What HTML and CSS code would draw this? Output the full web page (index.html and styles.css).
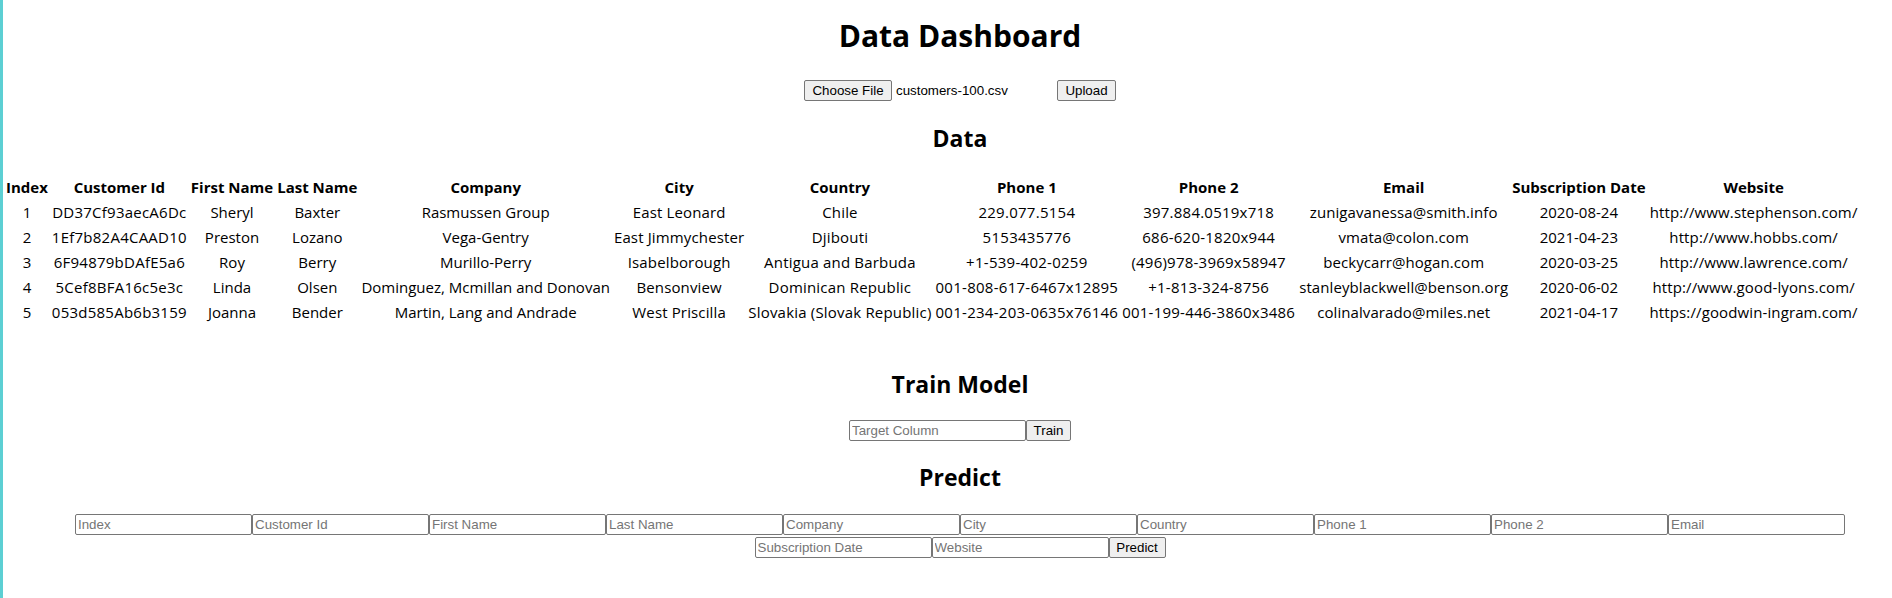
FILE: index.html
```html
<!DOCTYPE html>
<html lang="en">
<head>
<meta charset="utf-8">
<title>Data Dashboard</title>
<link rel="stylesheet" href="styles.css">
</head>
<body>
<h1 class="centered title">Data Dashboard</h1>
<form class="centered upload-row">
  <span class="file-input"><span class="btn btn-choose">Choose File</span><span class="file-name">customers-100.csv</span></span><button type="button" class="btn btn-upload">Upload</button>
</form>
<h2 class="centered section-title data-title">Data</h2>
<table class="data-table">
  <thead>
    <tr><th>Index</th><th>Customer Id</th><th>First Name</th><th>Last Name</th><th>Company</th><th>City</th><th>Country</th><th>Phone 1</th><th>Phone 2</th><th>Email</th><th>Subscription Date</th><th>Website</th></tr>
  </thead>
  <tbody>
    <tr><td>1</td><td>DD37Cf93aecA6Dc</td><td>Sheryl</td><td>Baxter</td><td>Rasmussen Group</td><td>East Leonard</td><td>Chile</td><td>229.077.5154</td><td>397.884.0519x718</td><td>zunigavanessa@smith.info</td><td>2020-08-24</td><td>http://www.stephenson.com/</td></tr>
    <tr><td>2</td><td>1Ef7b82A4CAAD10</td><td>Preston</td><td>Lozano</td><td>Vega-Gentry</td><td>East Jimmychester</td><td>Djibouti</td><td>5153435776</td><td>686-620-1820x944</td><td>vmata@colon.com</td><td>2021-04-23</td><td>http://www.hobbs.com/</td></tr>
    <tr><td>3</td><td>6F94879bDAfE5a6</td><td>Roy</td><td>Berry</td><td>Murillo-Perry</td><td>Isabelborough</td><td>Antigua and Barbuda</td><td>+1-539-402-0259</td><td>(496)978-3969x58947</td><td>beckycarr@hogan.com</td><td>2020-03-25</td><td>http://www.lawrence.com/</td></tr>
    <tr><td>4</td><td>5Cef8BFA16c5e3c</td><td>Linda</td><td>Olsen</td><td>Dominguez, Mcmillan and Donovan</td><td>Bensonview</td><td>Dominican Republic</td><td>001-808-617-6467x12895</td><td>+1-813-324-8756</td><td>stanleyblackwell@benson.org</td><td>2020-06-02</td><td>http://www.good-lyons.com/</td></tr>
    <tr><td>5</td><td>053d585Ab6b3159</td><td>Joanna</td><td>Bender</td><td>Martin, Lang and Andrade</td><td>West Priscilla</td><td>Slovakia (Slovak Republic)</td><td>001-234-203-0635x76146</td><td>001-199-446-3860x3486</td><td>colinalvarado@miles.net</td><td>2021-04-17</td><td>https://goodwin-ingram.com/</td></tr>
  </tbody>
</table>
<h2 class="centered section-title train-title">Train Model</h2>
<form class="centered train-row"><input class="field" type="text" placeholder="Target Column"><button type="button" class="btn btn-train">Train</button></form>
<h2 class="centered section-title predict-title">Predict</h2>
<form class="centered predict-row"><input class="field" type="text" placeholder="Index"><input class="field" type="text" placeholder="Customer Id"><input class="field" type="text" placeholder="First Name"><input class="field" type="text" placeholder="Last Name"><input class="field" type="text" placeholder="Company"><input class="field" type="text" placeholder="City"><input class="field" type="text" placeholder="Country"><input class="field" type="text" placeholder="Phone 1"><input class="field" type="text" placeholder="Phone 2"><input class="field" type="text" placeholder="Email"><input class="field" type="text" placeholder="Subscription Date"><input class="field" type="text" placeholder="Website"><button type="button" class="btn btn-predict">Predict</button></form>
</body>
</html>
```

FILE: styles.css
```css
html {
  background: #ffffff;
}

body {
  margin: 0;
  display: flow-root;
  min-height: 100vh;
  box-sizing: border-box;
  border-left: 3px solid #5ccfd3;
  background: #ffffff;
  color: #000000;
  font-family: "Open Sans", "Noto Sans", sans-serif;
  font-size: 15px;
  overflow: hidden;
}

.centered {
  padding-left: 25px;
  text-align: center;
}

.title {
  margin: 15px 0 23px;
  font-size: 30px;
  font-weight: 700;
  line-height: 42px;
}

.section-title {
  font-size: 23px;
  font-weight: 700;
  line-height: 32px;
  margin: 0;
}

.data-title {
  margin: 21px 0 20px;
}

.train-title {
  margin: 42px 0 20px;
}

.predict-title {
  margin: 20px 0 21px;
}

.upload-row,
.train-row {
  display: flex;
  justify-content: center;
  align-items: center;
  height: 21px;
  margin: 0;
}

.predict-row {
  display: flex;
  flex-wrap: wrap;
  justify-content: center;
  row-gap: 2px;
  margin: 0;
}

.file-input {
  display: inline-flex;
  align-items: center;
  width: 249px;
  margin-right: 4px;
}

.file-name {
  font-family: "Liberation Sans", Arial, sans-serif;
  font-size: 13.333px;
  margin-left: 4px;
}

.btn {
  display: inline-flex;
  align-items: center;
  justify-content: center;
  box-sizing: border-box;
  height: 21px;
  padding: 0;
  border: 1px solid #767676;
  border-radius: 2px;
  background: #efefef;
  color: #000000;
  font-family: "Liberation Sans", Arial, sans-serif;
  font-size: 13.333px;
  line-height: 15px;
}

.btn-choose { width: 88px; }
.btn-upload { width: 59px; }
.btn-train { width: 45px; }
.btn-predict { width: 57px; }

.field {
  box-sizing: border-box;
  width: 177px;
  height: 21px;
  margin: 0;
  padding: 1px 2px;
  border: 1px solid #767676;
  border-radius: 2px;
  background: #ffffff;
  font-family: "Liberation Sans", Arial, sans-serif;
  font-size: 13.333px;
  color: #000000;
}

.field::placeholder {
  color: #757575;
  opacity: 1;
}

.data-table {
  border-spacing: 2px;
  margin: 0;
}

.data-table th,
.data-table td {
  padding: 1px;
  line-height: 21px;
  text-align: center;
  white-space: nowrap;
}

.data-table th {
  font-weight: 700;
}

/* per-column tracking so Open Sans matches the reference column widths */
.data-table td:nth-child(2) { letter-spacing: 0.24px; }
.data-table td:nth-child(6) { letter-spacing: 0.14px; }
.data-table td:nth-child(7) { letter-spacing: 0.19px; }
.data-table td:nth-child(8) { letter-spacing: 0.27px; }
.data-table td:nth-child(9) { letter-spacing: 0.23px; }
.data-table td:nth-child(10) { letter-spacing: 0.09px; }
.data-table td:nth-child(12) { letter-spacing: 0.12px; }
```
